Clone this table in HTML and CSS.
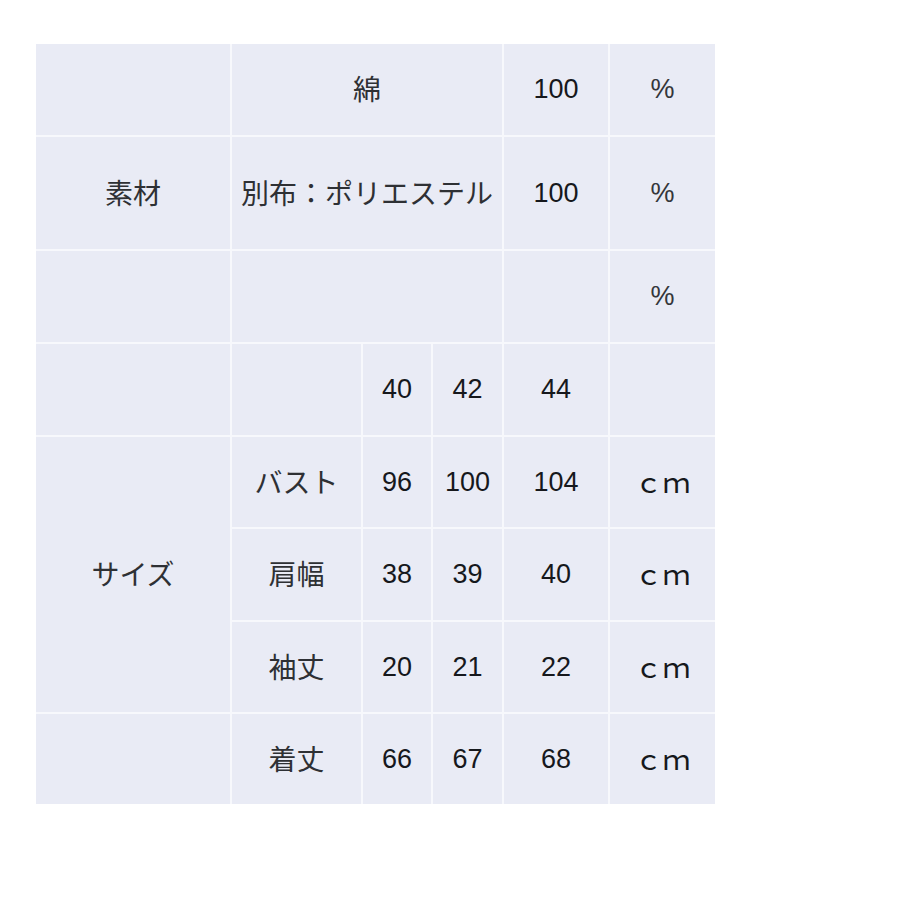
FILE: index.html
```html
<!DOCTYPE html>
<html lang="ja">
<head>
<meta charset="utf-8">
<title>素材・サイズ</title>
<link rel="stylesheet" href="styles.css">
</head>
<body>
<div class="sheet">
  <div class="cell"></div>
  <div class="cell span3 jp">綿</div>
  <div class="cell num">100</div>
  <div class="cell pct">%</div>

  <div class="cell jp">素材</div>
  <div class="cell span3 jp">別布：ポリエステル</div>
  <div class="cell num">100</div>
  <div class="cell pct">%</div>

  <div class="cell"></div>
  <div class="cell span3"></div>
  <div class="cell"></div>
  <div class="cell pct">%</div>

  <div class="cell"></div>
  <div class="cell"></div>
  <div class="cell num">40</div>
  <div class="cell num">42</div>
  <div class="cell num">44</div>
  <div class="cell"></div>

  <div class="cell rows3 jp">サイズ</div>
  <div class="cell jp">バスト</div>
  <div class="cell num">96</div>
  <div class="cell num">100</div>
  <div class="cell num">104</div>
  <div class="cell unit">ｃｍ</div>

  <div class="cell jp">肩幅</div>
  <div class="cell num">38</div>
  <div class="cell num">39</div>
  <div class="cell num">40</div>
  <div class="cell unit">ｃｍ</div>

  <div class="cell jp">袖丈</div>
  <div class="cell num">20</div>
  <div class="cell num">21</div>
  <div class="cell num">22</div>
  <div class="cell unit">ｃｍ</div>

  <div class="cell"></div>
  <div class="cell jp">着丈</div>
  <div class="cell num">66</div>
  <div class="cell num">67</div>
  <div class="cell num">68</div>
  <div class="cell unit">ｃｍ</div>
</div>
</body>
</html>
```

FILE: styles.css
```css
html, body {
  margin: 0;
  padding: 0;
  background: #ffffff;
}

body {
  padding: 44px 0 0 36px;
  font-family: "Liberation Sans", "Noto Sans CJK JP", sans-serif;
}

.sheet {
  display: grid;
  grid-template-columns: 194px 129px 68px 69px 104px 105px;
  grid-template-rows: 91px 112px 91px 91px 90px 91px 90px 90px;
  gap: 2px;
  width: 679px;
  background: #f7f8fc;
}

.cell {
  background: #e9ebf5;
  display: flex;
  align-items: center;
  justify-content: center;
  font-size: 26px;
  color: #222428;
}

.span3 {
  grid-column: span 3;
}

.rows3 {
  grid-row: span 3;
}

.jp {
  font-family: "Noto Sans CJK JP", sans-serif;
  font-size: 28px;
  line-height: 1;
  padding-bottom: 3px;
  color: #2e3034;
}

.num {
  font-family: "Liberation Sans", sans-serif;
  font-size: 27px;
  color: #16181c;
}

.pct {
  font-family: "Liberation Sans", sans-serif;
  font-size: 27px;
  color: #34363a;
}

.unit {
  font-family: "Noto Sans CJK JP", sans-serif;
  font-size: 28px;
  line-height: 1;
  padding-bottom: 3px;
  color: #16181c;
}
```
